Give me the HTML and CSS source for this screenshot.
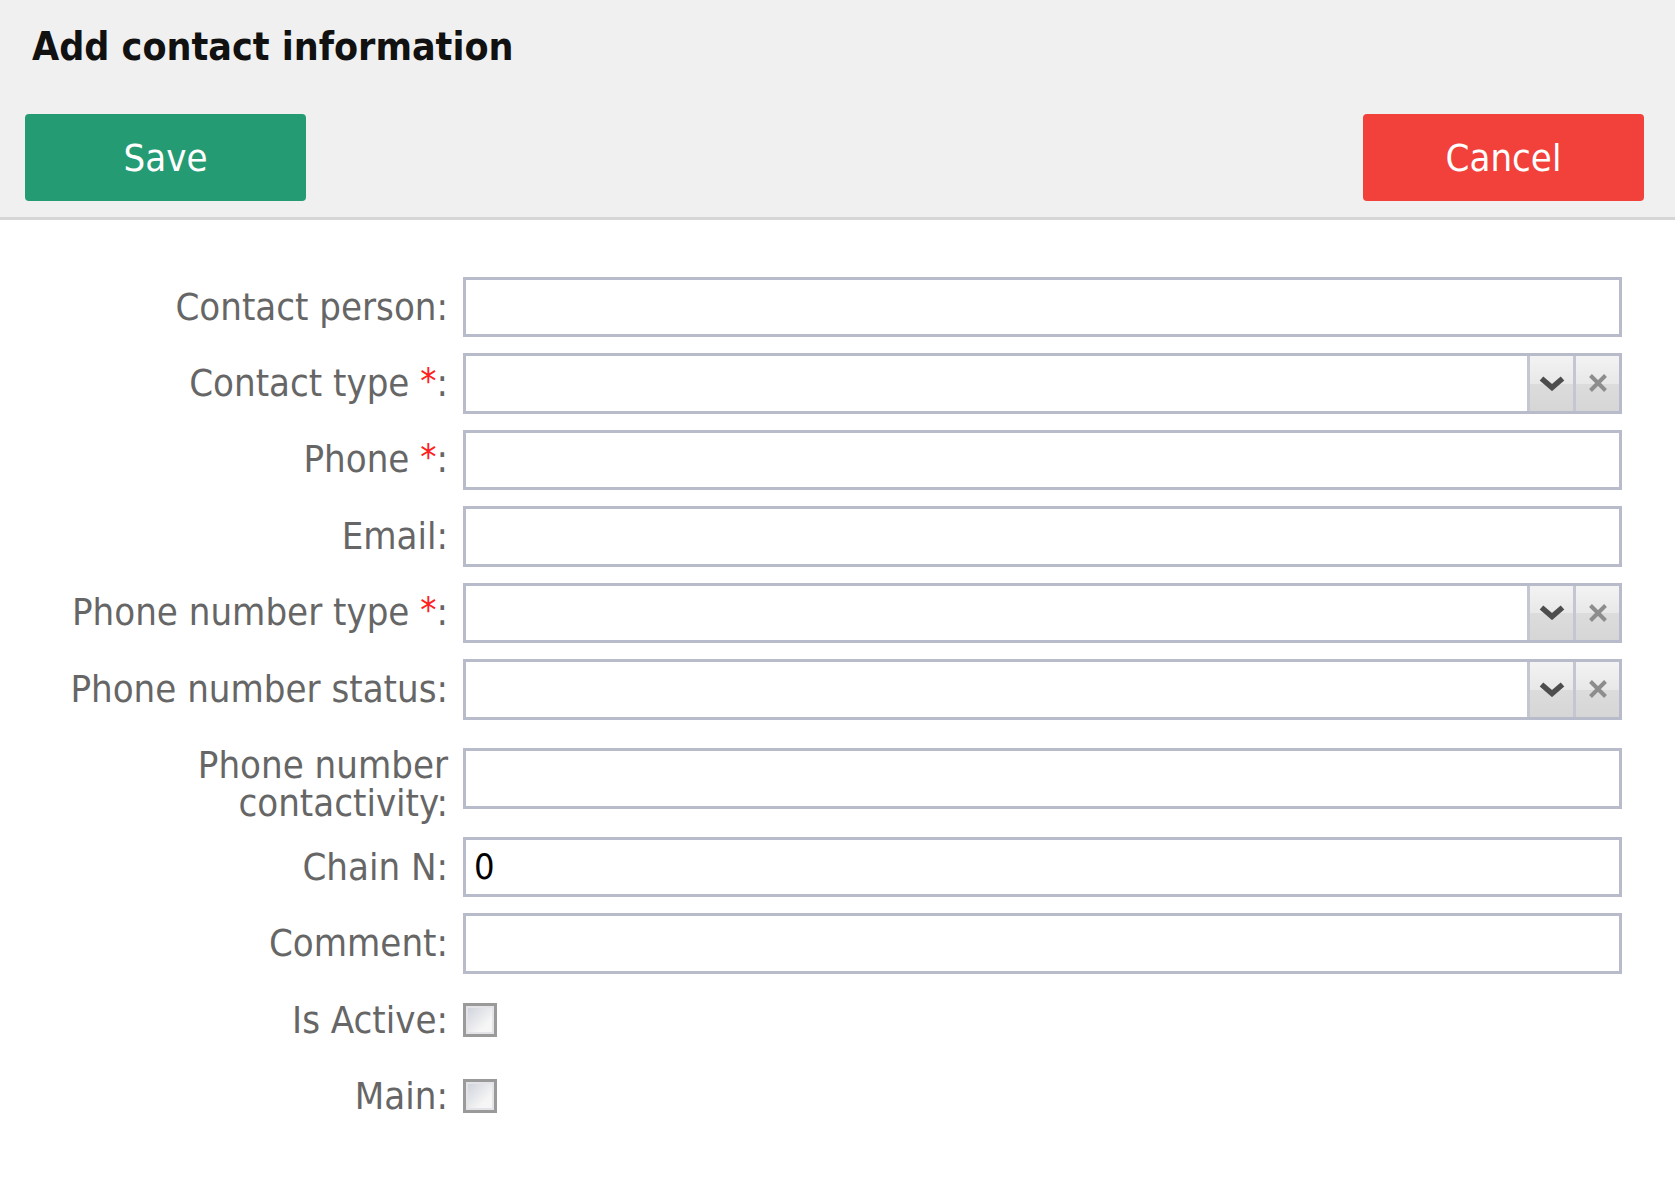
FILE: index.html
```html
<!DOCTYPE html>
<html lang="en">
<head>
<meta charset="utf-8">
<title>Add contact information</title>
<link rel="stylesheet" href="styles.css">
</head>
<body>
<div class="dialog">
  <header class="header">
    <h1 class="title">Add contact information</h1>
    <div class="actions">
      <button class="btn btn-save" type="button">Save</button>
      <button class="btn btn-cancel" type="button">Cancel</button>
    </div>
  </header>
  <form class="form">
    <div class="row">
      <label class="label">Contact person:</label>
      <div class="field"><input class="input" type="text"></div>
    </div>
    <div class="row">
      <label class="label">Contact type <span class="req">*</span>:</label>
      <div class="field combo">
        <input class="input combo-input" type="text">
        <span class="trigger"><svg viewBox="0 0 26 15" width="26" height="15"><path d="M2.5 2.5 L13 11.5 L23.5 2.5" fill="none" stroke="#4d4d4d" stroke-width="5.5"/></svg></span>
        <span class="trigger"><svg viewBox="0 0 20 20" width="20" height="20"><path d="M2.5 2.5 L17.5 17.5 M17.5 2.5 L2.5 17.5" fill="none" stroke="#8d8d8d" stroke-width="4"/></svg></span>
      </div>
    </div>
    <div class="row">
      <label class="label">Phone <span class="req">*</span>:</label>
      <div class="field"><input class="input" type="text"></div>
    </div>
    <div class="row">
      <label class="label">Email:</label>
      <div class="field"><input class="input" type="text"></div>
    </div>
    <div class="row">
      <label class="label">Phone number type <span class="req">*</span>:</label>
      <div class="field combo">
        <input class="input combo-input" type="text">
        <span class="trigger"><svg viewBox="0 0 26 15" width="26" height="15"><path d="M2.5 2.5 L13 11.5 L23.5 2.5" fill="none" stroke="#4d4d4d" stroke-width="5.5"/></svg></span>
        <span class="trigger"><svg viewBox="0 0 20 20" width="20" height="20"><path d="M2.5 2.5 L17.5 17.5 M17.5 2.5 L2.5 17.5" fill="none" stroke="#8d8d8d" stroke-width="4"/></svg></span>
      </div>
    </div>
    <div class="row">
      <label class="label">Phone number status:</label>
      <div class="field combo">
        <input class="input combo-input" type="text">
        <span class="trigger"><svg viewBox="0 0 26 15" width="26" height="15"><path d="M2.5 2.5 L13 11.5 L23.5 2.5" fill="none" stroke="#4d4d4d" stroke-width="5.5"/></svg></span>
        <span class="trigger"><svg viewBox="0 0 20 20" width="20" height="20"><path d="M2.5 2.5 L17.5 17.5 M17.5 2.5 L2.5 17.5" fill="none" stroke="#8d8d8d" stroke-width="4"/></svg></span>
      </div>
    </div>
    <div class="row row-tall">
      <label class="label label-wrap">Phone number<br>contactivity:</label>
      <div class="field"><input class="input" type="text"></div>
    </div>
    <div class="row">
      <label class="label">Chain N:</label>
      <div class="field"><input class="input" type="text" value="0"></div>
    </div>
    <div class="row">
      <label class="label">Comment:</label>
      <div class="field"><input class="input" type="text"></div>
    </div>
    <div class="row">
      <label class="label">Is Active:</label>
      <div class="field"><span class="checkbox"></span></div>
    </div>
    <div class="row">
      <label class="label">Main:</label>
      <div class="field"><span class="checkbox"></span></div>
    </div>
  </form>
</div>
</body>
</html>
```
FILE: styles.css
```css
* { box-sizing: border-box; }
html, body { margin: 0; padding: 0; background: #ffffff; }
body {
  font-family: "DejaVu Sans Condensed", "DejaVu Sans", sans-serif;
  font-stretch: condensed;
  font-size: 38px;
  color: #666666;
}
.header {
  background: #f0f0f0;
  border-bottom: 3px solid #d6d6d6;
  height: 220px;
  padding: 0 31px 0 25px;
}
.title {
  margin: 0;
  padding: 25px 0 0 7px;
  font-size: 39px;
  line-height: 44px;
  font-weight: bold;
  color: #111111;
}
.actions {
  display: flex;
  justify-content: space-between;
  margin-top: 45px;
}
.btn {
  width: 281px;
  height: 87px;
  border: none;
  border-radius: 4px;
  font-family: inherit;
  font-stretch: condensed;
  font-size: 38px;
  color: #ffffff;
  padding: 0;
}
.btn-save { background: #259b74; }
.btn-cancel { background: #f2403b; }
.form {
  display: flex;
  flex-direction: column;
  gap: 16px;
  padding: 56.5px 53px 40px 0;
}
.row {
  display: grid;
  grid-template-columns: 448px 1fr;
  column-gap: 15px;
  align-items: center;
  height: 60.5px;
}
.row-tall { height: 85px; }
.label {
  text-align: right;
  line-height: 40px;
  white-space: nowrap;
}
.label-wrap {
  align-self: start;
  line-height: 38px;
  padding-top: 10px;
}
.req {
  color: #ff2020;
  font-size: 36px;
  position: relative;
  top: -3px;
}
.field {
  display: flex;
  align-items: center;
  height: 100%;
}
.row-tall .field { height: 85px; }
.input {
  display: block;
  width: 100%;
  height: 60.5px;
  border: 3px solid #b8bbca;
  background: #ffffff;
  font-family: inherit;
  font-stretch: condensed;
  font-size: 36px;
  color: #000000;
  padding: 0 8px;
  outline: none;
}
.combo {
  border: 3px solid #b8bbca;
  height: 60.5px;
}
.combo-input {
  flex: 1;
  border: none;
  height: 100%;
}
.trigger {
  width: 46px;
  height: 100%;
  flex: none;
  border-left: 3px solid #c4c6d2;
  background: linear-gradient(#f3f3f3, #e8e8e8 50%, #dcdcdc 50%, #d6d6d6);
  display: flex;
  align-items: center;
  justify-content: center;
}
.trigger svg { display: block; }
.checkbox {
  display: block;
  width: 34px;
  height: 34px;
  border: 3px solid #9a9a9a;
  background: linear-gradient(135deg, #cdd0da, #f6f6f6 70%);
  box-shadow: inset 0 0 0 2px #e4e4e8;
}
```
